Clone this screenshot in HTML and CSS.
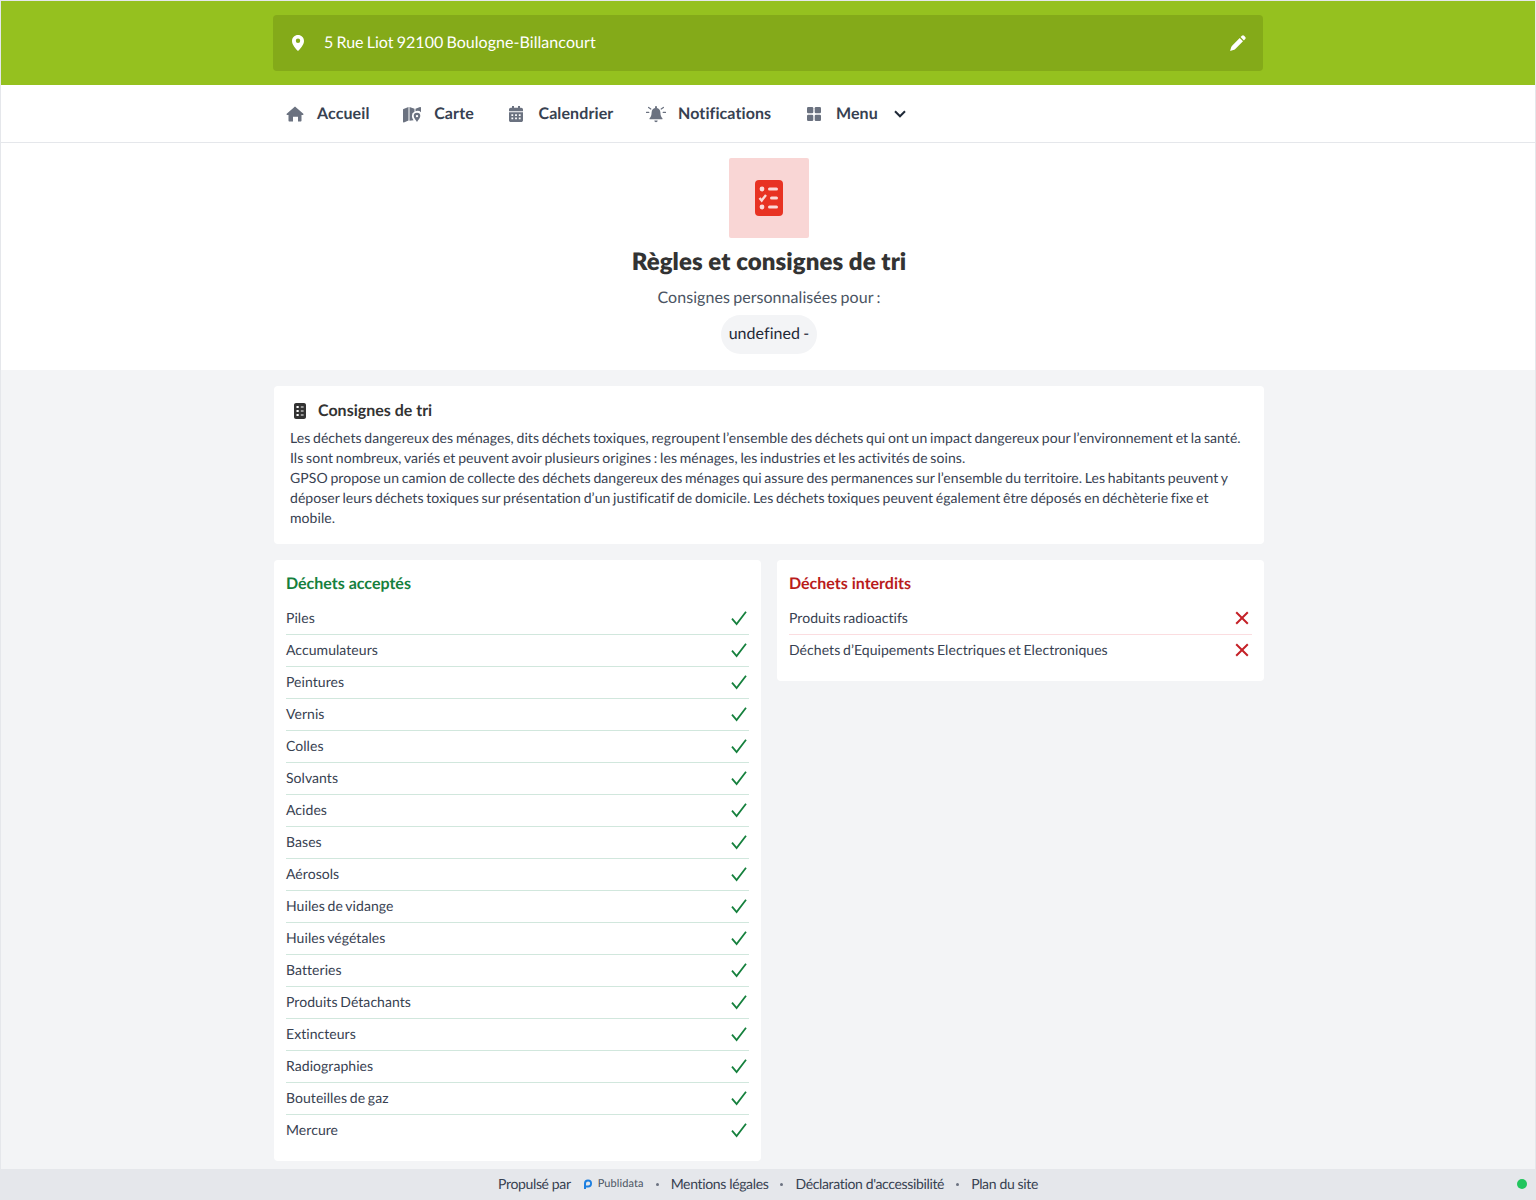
FILE: index.html
```html
<!DOCTYPE html>
<html lang="fr">
<head>
  <meta charset="UTF-8" />
  <meta name="viewport" content="width=device-width, initial-scale=1.0" />
  <title>Règles et consignes de tri</title>
  <link rel="stylesheet" href="styles.css">
</head>
<body>
  <svg class="sprites" width="0" height="0" aria-hidden="true">
    <symbol id="check" viewBox="0 0 16 16">
      <path d="M1 8.600 5.600 14 15 1.800" fill="none" stroke="currentColor" stroke-width="1.800"/>
    </symbol>
    <symbol id="cross" viewBox="0 0 14 14">
      <path d="M1.200 1.200 12.800 12.800M12.800 1.200 1.200 12.800" fill="none" stroke="currentColor" stroke-width="2"/>
    </symbol>
  </svg>

  <div class="page">
    <header class="top">
      <div class="address">
        <svg class="address-pin" viewBox="0 0 12 16"><path fill="#fff" fill-rule="evenodd" d="M6 0C2.700 0 0 2.600 0 5.900 0 9.700 4 14 6 16c2-2 6-6.300 6-10.100C12 2.600 9.300 0 6 0Zm0 8a2.200 2.200 0 1 1 0-4.400A2.200 2.200 0 0 1 6 8Z"/></svg>
        <span class="address-text">5 Rue Liot 92100 Boulogne-Billancourt</span>
        <svg class="address-edit" viewBox="0 0 16 16"><path fill="#fff" d="M11.900.8a1.600 1.600 0 0 1 2.200 0l1.100 1.100a1.600 1.600 0 0 1 0 2.200l-1.300 1.300-3.300-3.300ZM9.700 3 13 6.300 5.300 14c-.6.6-1.300.9-2 1.100L.1 16 1 12.700c.2-.8.500-1.500 1.100-2Z"/></svg>
      </div>
    </header>

    <nav class="nav">
      <div class="nav-inner">
        <a class="nav-item">
          <svg class="nav-icon" viewBox="0 0 20 20"><path d="M10 2.500 1.700 9.800c-.5.500-.2 1.200.5 1.200h1.300v5.500c0 .6.400 1 1 1h3.500v-4.700h5v4.700h2.500c.6 0 1-.4 1-1V11h1.300c.7 0 1-.7.500-1.200Z"/></svg>
          <span>Accueil</span>
        </a>
        <a class="nav-item">
          <svg class="nav-icon" viewBox="0 0 20 20"><path d="M1.500 5 6.500 3v13.600l-4.600 1.800c-.5.200-.9-.1-.9-.6V5.700c0-.3.200-.6.500-.7Z"/><path d="M7.500 3 12.500 4.800v3a4.300 4.300 0 0 0-2.600 4.100c0 1.500.8 3 1.700 4.400l-4.100.4Z"/><path fill-rule="evenodd" d="M15 8.800a3.300 3.300 0 0 0-3.300 3.300c0 1.900 2.200 4.400 3.300 5.900 1.100-1.500 3.300-4 3.300-5.900A3.300 3.300 0 0 0 15 8.800Zm0 4.500a1.200 1.200 0 1 1 0-2.400 1.200 1.200 0 0 1 0 2.400Z"/><path d="M13.500 4.800 18 3c.5-.2 1 .1 1 .6v4.600a5 5 0 0 0-5.500-1Z"/></svg>
          <span>Carte</span>
        </a>
        <a class="nav-item">
          <svg class="nav-icon" viewBox="0 0 20 20"><path fill-rule="evenodd" d="M6 2h2v1.800h4V2h2v1.800h1.200c1 0 1.800.8 1.800 1.800v1.600H3V5.600c0-1 .8-1.800 1.800-1.800H6ZM3 8.200h14v8c0 1-.8 1.800-1.800 1.800H4.800C3.800 18 3 17.200 3 16.200Zm2.400 2v1.800h1.800v-1.800Zm3.700 0v1.800h1.800v-1.800Zm3.700 0v1.800h1.800v-1.800Zm-7.400 3.300v1.800h1.800v-1.800Zm3.700 0v1.800h1.800v-1.800Zm3.700 0v1.800h1.800v-1.800Z"/></svg>
          <span>Calendrier</span>
        </a>
        <a class="nav-item">
          <svg class="nav-icon" viewBox="0 0 20 20"><path d="M10 4c-2.700 0-4.400 2-4.400 4.500 0 3-.8 4.500-2 5.800-.3.400-.1 1 .5 1h11.800c.6 0 .8-.6.500-1-1.200-1.300-2-2.800-2-5.800C14.400 6 12.700 4 10 4Z"/><rect x="9" y="2" width="2" height="2.500" rx="1"/><path d="M8.300 16.500h3.400a1.700 1.700 0 0 1-3.400 0Z"/><path d="M2.600 3.400 4.800 5M17.400 3.400 15.200 5M.4 8.400h2.400M17.200 8.400h2.400" fill="none" stroke="#6b7280" stroke-width="1.200" stroke-linecap="round"/></svg>
          <span>Notifications</span>
        </a>
        <a class="nav-item">
          <svg class="nav-icon" viewBox="0 0 20 20"><rect x="3" y="3" width="6.300" height="6.300" rx="1.200"/><rect x="10.700" y="3" width="6.300" height="6.300" rx="1.200"/><rect x="3" y="10.700" width="6.300" height="6.300" rx="1.200"/><rect x="10.700" y="10.700" width="6.300" height="6.300" rx="1.200"/></svg>
          <span>Menu</span>
          <svg class="nav-chevron" viewBox="0 0 12 8"><path d="M1 1.300 6 6.300l5-5" fill="none" stroke="#1f2937" stroke-width="2"/></svg>
        </a>
      </div>
    </nav>

    <section class="hero">
      <div class="hero-tile">
        <svg viewBox="0 0 28 36" class="hero-icon">
          <rect width="28" height="36" rx="4" fill="#e83323"/>
          <circle cx="7" cy="9" r="2.400" fill="#fbdad8"/>
          <rect x="13" y="7.500" width="10" height="3" rx="1.500" fill="#fbdad8"/>
          <path d="M4.500 18 6.700 20.500 11 15" fill="none" stroke="#fbdad8" stroke-width="2.400"/>
          <rect x="15" y="16.500" width="8" height="3" rx="1.500" fill="#fbdad8"/>
          <circle cx="7" cy="27" r="2.400" fill="#fbdad8"/>
          <rect x="13" y="25.500" width="10" height="3" rx="1.500" fill="#fbdad8"/>
        </svg>
      </div>
      <h1 class="hero-title">Règles et consignes de tri</h1>
      <p class="hero-sub">Consignes personnalisées pour :</p>
      <span class="hero-pill">undefined -</span>
    </section>

    <main class="content">
      <section class="card intro">
        <h2 class="intro-title">
          <svg class="intro-icon" viewBox="0 0 12 16"><path fill-rule="evenodd" d="M2 0h8c1.100 0 2 .9 2 2v12c0 1.100-.9 2-2 2H2c-1.100 0-2-.9-2-2V2C0 .9.900 0 2 0ZM2.500 3v2h2.200V3Zm4.300.4v1.200h2.800V3.400ZM2.500 7v2h2.200V7Zm4.300.4v1.200h2.800V7.400ZM2.500 11v2h2.200v-2Zm4.300.4v1.200h2.800v-1.200Z"/></svg>
          Consignes de tri
        </h2>
        <p class="intro-text">Les déchets dangereux des ménages, dits déchets toxiques, regroupent l’ensemble des déchets qui ont un impact dangereux pour l’environnement et la santé.<br>Ils sont nombreux, variés et peuvent avoir plusieurs origines : les ménages, les industries et les activités de soins.<br>GPSO propose un camion de collecte des déchets dangereux des ménages qui assure des permanences sur l’ensemble du territoire. Les habitants peuvent y déposer leurs déchets toxiques sur présentation d’un justificatif de domicile. Les déchets toxiques peuvent également être déposés en déchèterie fixe et mobile.</p>
      </section>

      <div class="columns">
        <section class="card waste waste-ok">
          <h3 class="waste-title">Déchets acceptés</h3>
          <ul class="waste-list">
            <li>Piles<svg><use href="#check"/></svg></li>
            <li>Accumulateurs<svg><use href="#check"/></svg></li>
            <li>Peintures<svg><use href="#check"/></svg></li>
            <li>Vernis<svg><use href="#check"/></svg></li>
            <li>Colles<svg><use href="#check"/></svg></li>
            <li>Solvants<svg><use href="#check"/></svg></li>
            <li>Acides<svg><use href="#check"/></svg></li>
            <li>Bases<svg><use href="#check"/></svg></li>
            <li>Aérosols<svg><use href="#check"/></svg></li>
            <li>Huiles de vidange<svg><use href="#check"/></svg></li>
            <li>Huiles végétales<svg><use href="#check"/></svg></li>
            <li>Batteries<svg><use href="#check"/></svg></li>
            <li>Produits Détachants<svg><use href="#check"/></svg></li>
            <li>Extincteurs<svg><use href="#check"/></svg></li>
            <li>Radiographies<svg><use href="#check"/></svg></li>
            <li>Bouteilles de gaz<svg><use href="#check"/></svg></li>
            <li>Mercure<svg><use href="#check"/></svg></li>
          </ul>
        </section>
        <section class="card waste waste-no">
          <h3 class="waste-title">Déchets interdits</h3>
          <ul class="waste-list">
            <li>Produits radioactifs<svg><use href="#cross"/></svg></li>
            <li>Déchets d’Equipements Electriques et Electroniques<svg><use href="#cross"/></svg></li>
          </ul>
        </section>
      </div>
    </main>

    <footer class="footer">
      <span>Propulsé par</span>
      <span class="brand">
        <svg class="brand-logo" viewBox="0 0 10 10"><path fill="#1d7fe0" fill-rule="evenodd" d="M1 10V4.500a4 4 0 1 1 4 4H3V10ZM3 6.600h2a2.100 2.100 0 1 0-2-2.100Z"/></svg>
        Publidata
      </span>
      <span class="dot"></span>
      <span>Mentions légales</span>
      <span class="dot"></span>
      <span>Déclaration d'accessibilité</span>
      <span class="dot"></span>
      <span>Plan du site</span>
      <span class="status"></span>
    </footer>
  </div>
</body>
</html>
```

FILE: styles.css
```css
* {
  box-sizing: border-box;
  margin: 0;
  padding: 0;
}

body {
  font-family: Lato, 'Liberation Sans', sans-serif;
  font-size: 14px;
  line-height: 20px;
  letter-spacing: 0.004em;
  word-spacing: -0.065em;
  background-color: #f3f4f6;
  color: #374151;
  text-rendering: geometricPrecision;
}

.sprites {
  position: absolute;
}

.page {
  border: 1px solid #e5e7eb;
  border-bottom: none;
  height: 1200px;
}

/* Address bar */
.top {
  background-color: #95c11f;
  height: 84px;
  padding-top: 14px;
}

.address {
  display: flex;
  align-items: center;
  width: 990px;
  height: 56px;
  margin: 0 auto;
  padding: 0 16px;
  background-color: #84aa19;
  border-radius: 4px;
  color: white;
  font-size: 16px;
  word-spacing: -1.1px;
}

.address-pin {
  width: 12px;
  height: 16px;
  margin-right: 20px;
  margin-left: 3px;
}

.address-edit {
  width: 16px;
  height: 16px;
  margin-left: auto;
  margin-right: 1px;
}

/* Nav */
.nav {
  background: white;
  height: 58px;
  border-bottom: 1px solid #e5e7eb;
}

.nav-inner {
  display: flex;
  align-items: center;
  gap: 32.7px;
  width: 990px;
  height: 57px;
  margin: 0 auto;
  padding-left: 12px;
  font-size: 16px;
  font-weight: 700;
  letter-spacing: 0.1px;
  color: #374151;
}

.nav-item {
  display: flex;
  align-items: center;
}

.nav-icon {
  width: 20px;
  height: 20px;
  margin-right: 12px;
  fill: #6b7280;
}

.nav-chevron {
  width: 12px;
  height: 8px;
  margin-left: 16px;
}

/* Hero */
.hero {
  display: flex;
  flex-direction: column;
  align-items: center;
  background: white;
  height: 227px;
  padding-top: 15px;
  padding-left: 2px;
}

.hero-tile {
  display: flex;
  align-items: center;
  justify-content: center;
  width: 80px;
  height: 80px;
  background-color: #f9d6d5;
  border-radius: 2px;
}

.hero-icon {
  width: 28px;
  height: 36px;
}

.hero-title {
  margin-top: 8px;
  font-size: 24px;
  line-height: 32px;
  font-weight: 800;
  letter-spacing: 0.08px;
  word-spacing: 0;
  color: #333;
}

.hero-sub {
  margin-top: 8px;
  font-size: 16px;
  line-height: 24px;
  color: #4b5563;
}

.hero-pill {
  margin-top: 5px;
  padding: 9px 8px 0;
  height: 39px;
  line-height: 20px;
  font-size: 16px;
  background-color: #f3f4f6;
  border-radius: 20px;
  color: #1f2937;
}

/* Cards */
.content {
  width: 990px;
  margin: 0 auto;
  padding-top: 16px;
  position: relative;
  left: 1px;
}

.card {
  background: white;
  border-radius: 4px;
}

.intro {
  padding: 15px 16px 16px;
  height: 158px;
}

.intro-title {
  display: flex;
  align-items: center;
  font-size: 16px;
  line-height: 20px;
  font-weight: 700;
  letter-spacing: 0;
  word-spacing: 0;
  color: #333;
}

.intro-icon {
  width: 12px;
  height: 16px;
  margin: 0 12px 0 4px;
  fill: #333;
}

.intro-text {
  margin-top: 7px;
  color: #374151;
}

.columns {
  display: grid;
  grid-template-columns: 1fr 1fr;
  gap: 16px;
  align-items: start;
  margin-top: 16px;
}

.waste {
  padding: 12px 12px 14px;
}

.waste-title {
  font-size: 16px;
  line-height: 24px;
  font-weight: 700;
  letter-spacing: 0;
  word-spacing: 0;
}

.waste-ok .waste-title {
  color: #15803d;
}

.waste-no .waste-title {
  color: #b91c1c;
}

.waste-list {
  list-style: none;
  margin-top: 7px;
}

.waste-list li {
  display: flex;
  align-items: center;
  justify-content: space-between;
  height: 32px;
  border-bottom: 1px solid #d1e7dd;
  padding-right: 2px;
  padding-bottom: 1px;
}

.waste-no .waste-list li {
  border-bottom-color: #fbdde0;
  padding-right: 3px;
}

.waste-list li:last-child {
  border-bottom: none;
  padding-bottom: 2px;
}

.waste-list svg {
  flex: none;
}

.waste-ok svg {
  width: 16px;
  height: 16px;
  color: #15803d;
}

.waste-no svg {
  width: 14px;
  height: 14px;
  color: #c42127;
}

/* Footer */
.footer {
  position: relative;
  display: flex;
  align-items: center;
  justify-content: center;
  gap: 12px;
  height: 31px;
  margin: 8px -1px 0;
  padding-bottom: 1px;
  background-color: #e5e7eb;
  color: #374151;
  letter-spacing: -0.35px;
  word-spacing: 0;
}

.brand {
  display: flex;
  align-items: center;
  gap: 5px;
  font-size: 11px;
  letter-spacing: 0.1px;
  color: #4b5563;
}

.brand-logo {
  width: 10px;
  height: 10px;
}

.dot {
  width: 3px;
  height: 3px;
  border-radius: 50%;
  background-color: #6b7280;
}

.status {
  position: absolute;
  right: 9px;
  top: 10px;
  width: 10px;
  height: 10px;
  border-radius: 50%;
  background-color: #22c55e;
}
```
